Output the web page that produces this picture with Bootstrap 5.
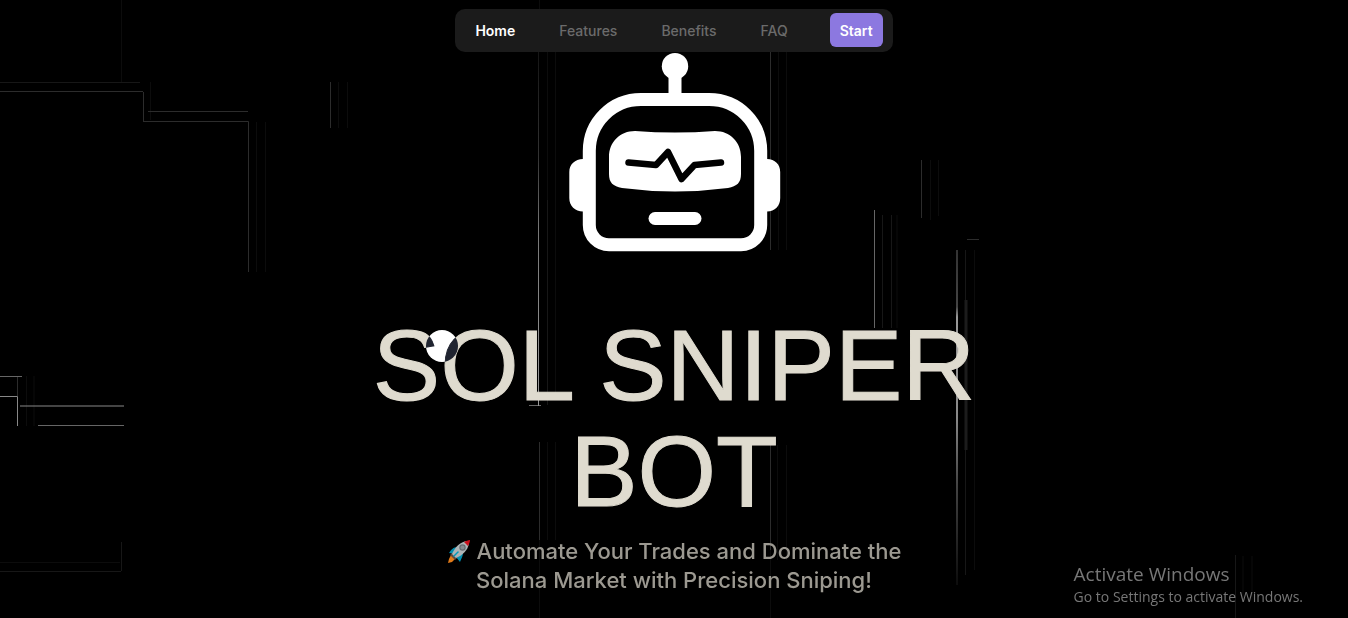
<!DOCTYPE html>
<html lang="en">
<head>
<meta charset="utf-8">
<meta name="viewport" content="width=device-width, initial-scale=1">
<title>Sol Sniper Bot</title>
<link href="https://cdn.jsdelivr.net/npm/bootstrap@5.3.0/dist/css/bootstrap.min.css" rel="stylesheet">
<style>
  body { background: #000; color: #dfdbcf; font-family: Inter, "Open Sans", sans-serif; }
  .hero { min-height: 100vh; padding-top: 52px; overflow: hidden; }
  .circuit { inset: 0; z-index: 0; }
  .hero-body { z-index: 1; }
  .site-nav { margin-top: 9px; height: 43px; padding: 4px 10px 5px 0; border-radius: 10px; background: #1b1b1b; font-size: 14px; font-weight: 500; }
  .site-nav .nav-link { padding: 2px 22px 0; line-height: 34px; color: #6b6b6b; }
  .site-nav .nav-item:first-child .nav-link { padding-left: 20px; }
  .site-nav .nav-item:last-child .nav-link { padding-right: 42px; }
  .site-nav .nav-link.active { color: #fff; font-weight: 600; }
  .btn-start { --bs-btn-bg: #8c78e0; --bs-btn-color: #fff; --bs-btn-hover-bg: #7b66d6; --bs-btn-hover-color: #fff; height: 34px; padding: 0 10px; border: 0; border-radius: 6px; font-size: 14px; font-weight: 600; }
  .hero-title { margin: 60px 0 13px; max-width: 680px; font: 400 101px/106px "Liberation Sans", Arial, sans-serif; color: #dfdbcf; -webkit-text-stroke: 1px #dfdbcf; }
  .tagline { max-width: 480px; font-size: 22px; line-height: 29px; font-weight: 500; color: #9c9991; }
  .rocket { width: 24px; height: 24px; margin-right: 6px; vertical-align: -4px; }
  .cursor-dot { left: 426px; top: 330px; width: 32px; height: 32px; background: #fff; mix-blend-mode: difference; z-index: 3; pointer-events: none; }
  .watermark { right: 45px; bottom: 11px; z-index: 2; font-family: "Open Sans", sans-serif; color: #777; }
  .watermark-title { font-size: 19px; line-height: 24px; }
  .watermark-note { font-size: 14px; line-height: 21px; }
</style>
</head>
<body>
<header class="fixed-top d-flex justify-content-center">
  <nav class="site-nav d-flex align-items-center" aria-label="Main">
    <ul class="nav flex-nowrap">
      <li class="nav-item"><a class="nav-link active" aria-current="page" href="#home">Home</a></li>
      <li class="nav-item"><a class="nav-link" href="#features">Features</a></li>
      <li class="nav-item"><a class="nav-link" href="#benefits">Benefits</a></li>
      <li class="nav-item"><a class="nav-link" href="#faq">FAQ</a></li>
    </ul>
    <button type="button" class="btn btn-start">Start</button>
  </nav>
</header>

<main id="home" class="hero position-relative">
  <!-- Faint circuit traces behind the hero -->
  <svg class="circuit position-absolute w-100 h-100" viewBox="0 0 1348 618" preserveAspectRatio="xMidYMid slice" fill="none" stroke-width="1" aria-hidden="true">
    <defs>
      <linearGradient id="traceA" gradientUnits="userSpaceOnUse" x1="0" y1="50" x2="0" y2="406">
        <stop offset="0" stop-color="#151515"/><stop offset=".3" stop-color="#333"/><stop offset=".5" stop-color="#777"/><stop offset="1" stop-color="#999"/>
      </linearGradient>
      <linearGradient id="traceB" gradientUnits="userSpaceOnUse" x1="0" y1="250" x2="0" y2="585">
        <stop offset="0" stop-color="#333"/><stop offset=".17" stop-color="#444"/><stop offset=".2" stop-color="#999"/><stop offset=".5" stop-color="#888"/><stop offset=".7" stop-color="#444"/><stop offset="1" stop-color="#0c0c0c"/>
      </linearGradient>
    </defs>
    <path stroke="#0c0c0c" d="M121.500 0V82M150.500 82V120M256.500 122V272M265.500 122V272M338.500 82V128M347.500 82V128M547.500 442V540M555.500 442V540M547.500 50V210M555.500 50V400M778.500 50V250M786.500 50V250M897 215V328M777.500 445V560M786.500 445V560M930.500 160V220M938.500 160V216M974.500 250V570M0 562.500H120M26.500 376V426M34 376V426M1243 556V600M1252 556V600M539.500 540V618M770.500 550V618M539.500 0V50"/>
    <path stroke="#171717" d="M0 82.500H140M882.500 215V328M891.500 215V328M965.500 250V575M547.500 200V405M121.500 542V571M0 571.500H121M1235.500 555V618"/>
    <path stroke="#2c2c2c" d="M0 91.500H143M143.500 92V121M148 111.500H248M143 121.500H248.500V272M330.500 82V128M770.500 52V250M770.500 442V550M921.500 160V218M539.500 442V540M17.500 376V396M967 239.500H979"/>
    <path stroke="#666" d="M0 376.500H22M38 425.500H124M529 405.500H541M874.500 210V328"/>
    <path stroke="#888" d="M0 396.500H17.500V426M20 406H124"/>
    <path stroke="#1c1c1c" stroke-width="3" d="M966 300V450"/>
    <path stroke="url(#traceA)" d="M538.500 50V406"/>
    <path stroke="url(#traceB)" stroke-width="2" d="M957 250V585"/>
  </svg>

  <div class="hero-body position-relative d-flex flex-column align-items-center text-center">
    <svg width="212" height="200" viewBox="8 7 212 200" overflow="visible" role="img" aria-label="Robot">
      <g fill="#fff">
        <circle cx="115" cy="21.200" r="13.200"/>
        <path d="M108.500 30h13v22h-13z"/>
        <path d="M23 114v52.500C15 166.500 9.300 161 9.300 153V127C9.300 119.500 15 114 23 114zM207 114v52.500c8 0 13.200-5.500 13.200-13.500V127C220.200 119.500 215 114 207 114z"/>
      </g>
      <path fill="#000" stroke="#fff" stroke-width="13" d="M81 54.500H149C178 54.500 200.700 77.500 200.700 106V180C200.700 191 192 199.700 181 199.700H49C38 199.700 29.300 191 29.300 180V106C29.300 77.500 52 54.500 81 54.500z"/>
      <path fill="#fff" d="M75 86Q115 89 155 86C170 86 181 97 181 112V129C181 138 177 141 168 143Q115 150 62 143C53 141 49 138 49 129V112C49 97 60 86 75 86z"/>
      <path fill="none" stroke="#000" stroke-width="6.500" stroke-linecap="round" stroke-linejoin="round" d="M68.500 117.500L96 120L108 107L121.500 134L134.500 120L161 117.500"/>
      <rect x="88.500" y="167" width="53" height="13" rx="6.500" fill="#fff"/>
    </svg>

    <h1 class="hero-title">SOL SNIPER BOT</h1>
    <p class="tagline mb-0">
      <svg class="rocket" viewBox="0 0 24 24" role="img" aria-label="Rocket">
        <path fill="#008eb0" d="M11 8C6 8 4 11 2 14l5 1zM16 13c0 5-2 7-3 10l-4-5z"/>
        <path fill="#e27a18" d="M4 16l4 4-3 3-4 1 1-4z"/>
        <path fill="#604a40" d="M5 14l5 5-2 2-5-5z"/>
        <path fill="#adb3b5" d="M5 15C8 8 13 3 20 2l2 2c-1 7-6 12-13 15z"/>
        <path fill="#c9101c" d="M17 3c2-1 4-2 6-2 0 2-1 4-2 6z"/>
        <circle cx="15.500" cy="8.500" r="3.200" fill="#656b70"/>
        <circle cx="15.500" cy="8.500" r="2" fill="#858b90"/>
        <path stroke="#0099bb" stroke-width="1.500" stroke-linecap="round" d="M7 17l4-4"/>
      </svg>Automate Your Trades and Dominate the Solana Market with Precision Sniping!
    </p>
  </div>

  <aside class="watermark position-absolute">
    <div class="watermark-title">Activate Windows</div>
    <div class="watermark-note">Go to Settings to activate Windows.</div>
  </aside>
  <div class="cursor-dot position-absolute rounded-circle"></div>
</main>
<script src="https://cdn.jsdelivr.net/npm/bootstrap@5.3.0/dist/js/bootstrap.bundle.min.js"></script>
</body>
</html>
